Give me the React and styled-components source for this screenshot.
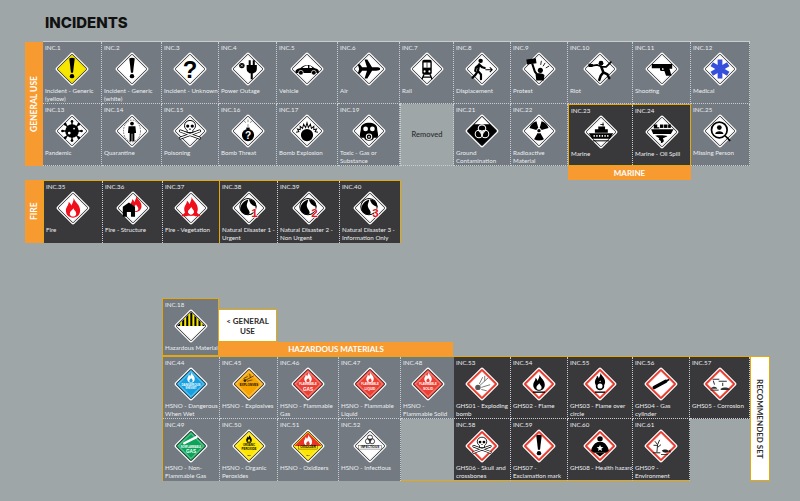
import styled, { createGlobalStyle } from 'styled-components';

const FLAME = 'M2,-28 C4,-16 20,-10 20,8 C20,20 11,28 0,28 C-11,28 -20,20 -20,8 C-20,-2 -12,-6 -12,-16 C-8,-14 -6,-10 -5,-6 C-2,-12 2,-18 2,-28Z M1,2 C3,8 9,10 9,17 C9,22 5,25 0,25 C-5,25 -9,22 -9,17 C-9,10 -2,8 1,2Z';

const diamond = v => `0,-${v} ${v},0 0,${v} -${v},0`;

function Sign({ fill = '#fff', edge = '#2b2b2b', thick = false, inset = false, children }) {
  return (
    <Icon viewBox="-50 -50 100 100">
      <polygon points={diamond(42)} fill="#fff" stroke="#fff" strokeWidth="12" strokeLinejoin="round" />
      <polygon points={diamond(40)} fill={edge} stroke={edge} strokeWidth="8" strokeLinejoin="round" />
      <polygon points={diamond(thick ? 37 : 40)} fill={fill} stroke={fill} strokeWidth={thick ? 1 : 3.5} strokeLinejoin="round" />
      {inset && <polygon points={diamond(37)} fill="none" stroke="#fff" strokeWidth="1.5" strokeLinejoin="round" />}
      {children}
    </Icon>
  );
}

const Flame = ({ x = 0, y = 0, s = 1, color = '#000' }) => (
  <path d={FLAME} fill={color} fillRule="evenodd" transform={`translate(${x} ${y}) scale(${s})`} />
);

const Bang = () => (
  <>
    <path d="M-8,-31 Q0,-35 8,-31 L3,11 L-3,11Z" fill="#000" />
    <circle cx="0" cy="21" r="6.5" fill="#000" />
  </>
);

const Skull = ({ y = 0, s = 1 }) => (
  <g transform={`translate(0 ${y}) scale(${s})`}>
    <line x1="-30" y1="2" x2="30" y2="24" stroke="#000" strokeWidth="9" strokeLinecap="round" />
    <line x1="30" y1="2" x2="-30" y2="24" stroke="#000" strokeWidth="9" strokeLinecap="round" />
    <line x1="-30" y1="2" x2="30" y2="24" stroke="#fff" strokeWidth="4.5" strokeLinecap="round" />
    <line x1="30" y1="2" x2="-30" y2="24" stroke="#fff" strokeWidth="4.5" strokeLinecap="round" />
    <path d="M-17,-14 C-17,-36 17,-36 17,-14 C17,-6 11,-3 9,0 V7 H-9 V0 C-11,-3 -17,-6 -17,-14Z" fill="#fff" stroke="#000" strokeWidth="3" />
    <circle cx="-7" cy="-13" r="5" fill="#000" />
    <circle cx="7" cy="-13" r="5" fill="#000" />
    <path d="M0,-7 L3,-2 H-3Z" fill="#000" />
  </g>
);

const Biohazard = ({ color = '#fff', y = 0, s = 1 }) => (
  <g transform={`translate(0 ${y}) scale(${s})`} fill="none" stroke={color} strokeWidth="3">
    <circle cx="0" cy="-10" r="11" />
    <circle cx="-9" cy="6" r="11" />
    <circle cx="9" cy="6" r="11" />
    <circle cx="0" cy="1" r="5" strokeWidth="2" />
  </g>
);

const sector = (mid, half, r0, r1, cy) => {
  const pt = (a, r) => {
    const t = (a * Math.PI) / 180;
    return `${(r * Math.cos(t)).toFixed(1)},${(cy + r * Math.sin(t)).toFixed(1)}`;
  };
  return `M${pt(mid - half, r0)} L${pt(mid - half, r1)} A${r1},${r1} 0 0 1 ${pt(mid + half, r1)} L${pt(mid + half, r0)} A${r0},${r0} 0 0 0 ${pt(mid - half, r0)}Z`;
};

const Globe = ({ n }) => (
  <>
    <circle cx="-3" cy="-4" r="24" fill="#fff" stroke="#000" strokeWidth="3" />
    <path d="M-25,-2 C-20,-18 -8,-24 -2,-24 C-4,-16 -8,-10 -6,-4 C-4,4 2,6 2,14 C2,20 -6,20 -12,18 C-20,14 -26,8 -25,-2Z" fill="#000" />
    <path d="M0,-26 C12,-26 20,-16 22,-4 C12,-6 2,-12 0,-26Z" fill="#000" />
    <SignText x="16" y="26" fontSize="34" fill="#e8141c" stroke="#fff" strokeWidth="2.5" paintOrder="stroke">{n}</SignText>
  </>
);

const Labels = ({ color = '#fff', lines }) =>
  lines.map(([text, y, size, len]) => (
    <SignText key={text} x="0" y={y} fontSize={size} fill={color} textLength={len} lengthAdjust="spacingAndGlyphs">
      {text}
    </SignText>
  ));

const glyphs = {
  yellowBang: () => <Sign fill="#f7e600"><Bang /></Sign>,
  bang: () => <Sign><Bang /></Sign>,
  question: () => <Sign><SignText x="0" y="25" fontSize="70" fill="#000">?</SignText></Sign>,
  plug: () => (
    <Sign>
      <circle cx="-18" cy="-10" r="8" fill="#000" />
      <path d="M-21,-13 L-15,-7 M-15,-13 L-21,-7" stroke="#fff" strokeWidth="2" />
      <path d="M2,-26 H8 V-12 H14 V-26 H20 V-12 H26 V0 C26,9 18,13 14,13 V30 H8 V13 C5,13 -4,9 -4,0 V-12 H2Z" fill="#000" />
    </Sign>
  ),
  car: () => (
    <Sign>
      <path d="M-34,8 C-34,1 -26,-1 -19,-3 C-10,-13 6,-14 14,-8 L23,-2 C31,-1 35,3 35,9 L33,12 H-32Z" fill="#000" />
      <path d="M-14,-3 C-8,-9 -2,-10 3,-10 V-3Z M7,-10 C10,-9 13,-7 16,-3 H7Z" fill="#fff" />
      <circle cx="-18" cy="11" r="7" fill="#000" stroke="#fff" strokeWidth="2" />
      <circle cx="20" cy="11" r="7" fill="#000" stroke="#fff" strokeWidth="2" />
    </Sign>
  ),
  plane: () => (
    <Sign>
      <path d="M33,0 C33,-4 27,-5 21,-5 H9 L-5,-28 H-13 L-6,-5 H-20 L-27,-14 H-33 L-29,0 L-33,14 H-27 L-20,5 H-6 L-13,28 H-5 L9,5 H21 C27,5 33,4 33,0Z" fill="#000" />
    </Sign>
  ),
  rail: () => (
    <Sign>
      <rect x="-14" y="-27" width="28" height="44" rx="6" fill="#000" />
      <rect x="-10" y="-19" width="20" height="15" fill="#fff" />
      <rect x="-1" y="-19" width="2" height="15" fill="#000" />
      <circle cx="-7" cy="7" r="3" fill="#fff" />
      <circle cx="7" cy="7" r="3" fill="#fff" />
      <path d="M-9,16 L-15,30 M9,16 L15,30 M-12,24 H12" stroke="#000" strokeWidth="4" fill="none" />
    </Sign>
  ),
  displacement: () => (
    <Sign>
      <circle cx="-4" cy="-24" r="6.5" fill="#000" />
      <path d="M-8,-14 L-12,6 L-3,16 L-3,30 M-12,6 L-20,18 L-28,26 M-8,-13 L-18,-4 L-20,6 M-8,-13 L1,-5 L8,-3" stroke="#000" strokeWidth="6.5" strokeLinecap="round" strokeLinejoin="round" fill="none" />
      <path d="M10,2 H30 M23,-5 L30,2 L23,9" stroke="#000" strokeWidth="3" fill="none" />
    </Sign>
  ),
  protest: () => (
    <Sign>
      <rect x="-36" y="-30" width="28" height="15" fill="#000" transform="rotate(-8 -21 -21)" />
      <path d="M-20,-16 L-12,8 L-4,18" stroke="#000" strokeWidth="6" fill="none" />
      <circle cx="4" cy="4" r="7.5" fill="#000" />
      <path d="M-8,34 L-10,16 C-2,10 10,12 16,18 L14,34Z" fill="#000" />
      <path d="M12,-8 L18,-18 M20,-3 L30,-9 M5,-12 L7,-24" stroke="#000" strokeWidth="2.5" />
    </Sign>
  ),
  riot: () => (
    <Sign>
      <circle cx="3" cy="-17" r="7" fill="#000" />
      <path d="M4,-6 L10,10 L2,20 L-2,32 M10,10 L22,16 L27,27" stroke="#000" strokeWidth="7.5" strokeLinecap="round" strokeLinejoin="round" fill="none" />
      <path d="M5,-7 L-8,-12 L-22,-10 M6,-6 L18,-6 L32,-20" stroke="#000" strokeWidth="5" strokeLinecap="round" strokeLinejoin="round" fill="none" />
      <path d="M-34,-16 L-20,-14 L-22,-6 L-34,-6Z" fill="#000" />
    </Sign>
  ),
  gun: () => (
    <Sign>
      <path d="M-30,-15 H30 V-1 H22 L28,20 H12 L7,6 H-2 C-5,6 -6,4 -6,1 V-2 H-30Z M0,-2 V2 H5 L4,-2Z" fill="#000" fillRule="evenodd" />
    </Sign>
  ),
  medical: () => (
    <Sign>
      {[0, 60, 120].map(a => (
        <rect key={a} x="-7" y="-28" width="14" height="56" fill="#3650dc" transform={`rotate(${a})`} />
      ))}
    </Sign>
  ),
  pandemic: () => (
    <Sign>
      {[0, 45, 90, 135, 180, 225, 270, 315].map(a => (
        <g key={a} transform={`rotate(${a})`}>
          <rect x="-2" y="-29" width="4" height="12" fill="#000" />
          <circle cx="0" cy="-28" r="4" fill="#000" />
        </g>
      ))}
      <circle r="20" fill="#000" />
      <circle cx="-8" cy="6" r="4" fill="#fff" />
      <circle cx="6" cy="-7" r="2.5" fill="#fff" />
    </Sign>
  ),
  quarantine: () => (
    <Sign>
      <ellipse cx="0" cy="0" rx="25" ry="32" fill="none" stroke="#000" strokeWidth="1.5" strokeDasharray="5 3" />
      <circle cx="0" cy="-22" r="5.5" fill="#000" />
      <path d="M-10,-14 H10 L12,6 H7 V30 H1 V8 H-1 V30 H-7 V6 H-12Z" fill="#000" />
    </Sign>
  ),
  poison: () => <Sign><Skull y="-2" s="0.95" /></Sign>,
  bombThreat: () => (
    <Sign>
      <circle cx="0" cy="12" r="18" fill="#000" />
      <rect x="-5" y="-10" width="10" height="6" fill="#000" />
      <path d="M0,-10 V-20 M0,-26 V-34 M-7,-24 L-11,-30 M7,-24 L11,-30" stroke="#555" strokeWidth="2" />
      <SignText x="0" y="23" fontSize="30" fill="#fff">?</SignText>
    </Sign>
  ),
  explosion: () => (
    <Sign>
      <circle cx="0" cy="12" r="18" fill="#000" />
      <path d="M-32,4 L-24,2 L-28,-6 L-20,-4 L-20,-14 L-13,-8 L-10,-20 L-4,-10 L0,-24 L4,-10 L10,-20 L13,-8 L20,-14 L20,-4 L28,-6 L24,2 L32,4" fill="none" stroke="#000" strokeWidth="3" />
    </Sign>
  ),
  gasMask: () => (
    <Sign>
      <path d="M-24,-8 C-24,-30 24,-30 24,-8 C24,4 30,12 24,20 L14,20 C14,32 -14,32 -14,20 L-24,20 C-30,12 -24,4 -24,-8Z" fill="#000" />
      <circle cx="-10" cy="-6" r="7" fill="#fff" />
      <circle cx="10" cy="-6" r="7" fill="#fff" />
      <circle cx="0" cy="17" r="8" fill="none" stroke="#fff" strokeWidth="3" />
      <circle cx="0" cy="17" r="2.5" fill="#fff" />
    </Sign>
  ),
  biohazardGround: () => (
    <Sign fill="#000">
      <polygon points="0,-42 22,-20 -22,-20" fill="#fff" />
      <Biohazard y="3" />
    </Sign>
  ),
  radiation: () => (
    <Sign>
      {[-135, -45, 90].map(a => (
        <path key={a} d={sector(a, 30, 8, 29, -1)} fill="#000" />
      ))}
      <circle cx="0" cy="-1" r="5" fill="#000" />
    </Sign>
  ),
  ship: () => (
    <Sign>
      <path d="M6,-28 V-16 M-2,-22 H8" stroke="#000" strokeWidth="2.5" />
      <path d="M-8,-16 H12 V-8 H20 V2 H-18 V-8 H-8Z" fill="#000" />
      <path d="M-36,4 H36 L26,20 H-26Z" fill="#000" />
      {[-20, -12, -4, 4, 12, 20].map(x => (
        <rect key={x} x={x - 2} y="9" width="4" height="5" fill="#fff" />
      ))}
      <path d="M-24,26 H24" stroke="#000" strokeWidth="3" />
    </Sign>
  ),
  oilSpill: () => (
    <Sign>
      <path d="M-32,-8 H34 L26,6 H-26Z" fill="#000" />
      <path d="M-24,-10 V-22 H-14 V-14 H-8 V-10Z" fill="#000" />
      <rect x="-6" y="-22" width="10" height="10" fill="#000" />
      <rect x="6" y="-22" width="10" height="10" fill="#000" />
      <rect x="18" y="-22" width="8" height="10" fill="#000" />
      <path d="M-20,11 C-8,9 8,10 16,12 C10,18 0,16 4,22 C8,28 2,32 -4,33 C0,28 -6,24 -10,22 C-4,18 -14,16 -20,11Z" fill="#000" />
    </Sign>
  ),
  missing: () => (
    <Sign>
      <circle cx="-2" cy="-3" r="23" fill="none" stroke="#000" strokeWidth="5" />
      <circle cx="-2" cy="-10" r="7" fill="#000" />
      <path d="M-14,9 C-14,-2 10,-2 10,9Z" fill="#000" />
      <path d="M15,14 L30,29" stroke="#000" strokeWidth="5" />
    </Sign>
  ),
  fire: () => <Sign><Flame color="#f0101c" s="1.05" y="-1" /></Sign>,
  fireStructure: () => (
    <Sign>
      <Flame color="#f0101c" x="8" y="-12" s="0.85" />
      <path d="M-30,-4 L-12,-16 L6,-4 V26 H-6 V12 H-18 V26 H-30Z" fill="#000" />
    </Sign>
  ),
  fireVegetation: () => (
    <Sign>
      <Flame color="#f0101c" s="1" y="-5" />
      <path d="M-30,24 C-22,18 -16,14 -12,2 C-12,14 -4,18 0,24 C4,18 12,14 12,2 C16,14 22,18 30,24 H12 C6,20 -6,20 -12,24Z" fill="#f0101c" />
    </Sign>
  ),
  disaster1: () => <Sign><Globe n="1" /></Sign>,
  disaster2: () => <Sign><Globe n="2" /></Sign>,
  disaster3: () => <Sign><Globe n="3" /></Sign>,
  hazmat: () => (
    <Sign>
      <polygon points="0,-41 41,0 -41,0" fill="#000" />
      {[-32, -20, -8, 4, 16, 28].map(x => (
        <polygon key={x} points={`${x},${-41 + Math.abs(x)} ${x + 6},${-41 + Math.abs(x + 6)} ${x + 6},0 ${x},0`} fill="#f7e600" />
      ))}
    </Sign>
  ),
  wet: () => (
    <Sign fill="#14a0e2" inset>
      <Flame color="#fff" y="-19" s="0.55" />
      <Labels lines={[['DANGEROUS', 5, 10, 56], ['WHEN WET', 15, 8, 32]]} />
    </Sign>
  ),
  explosives: () => (
    <Sign fill="#f8a400" inset>
      <path d="M-12,-10 L14,-24 M-16,-16 L-4,-22 M-6,-8 L10,-12 M2,-30 L4,-18" stroke="#222" strokeWidth="2" />
      <circle cx="-12" cy="-10" r="4" fill="#222" />
      <Labels color="#000" lines={[['EXPLOSIVES', 5, 10, 54]]} />
    </Sign>
  ),
  flamGas: () => (
    <Sign fill="#ee3f34" inset>
      <Flame color="#fff" y="-19" s="0.55" />
      <Labels lines={[['FLAMMABLE', 4, 9, 52], ['GAS', 21, 17, 30]]} />
    </Sign>
  ),
  flamLiquid: () => (
    <Sign fill="#ee3f34" inset>
      <Flame color="#fff" y="-19" s="0.55" />
      <Labels lines={[['FLAMMABLE', 4, 9, 52], ['LIQUID', 17, 11, 32]]} />
    </Sign>
  ),
  flamSolid: () => (
    <Sign fill="#ee3f34" inset>
      <Flame color="#fff" y="-19" s="0.55" />
      <Labels lines={[['FLAMMABLE', 4, 9, 52], ['SOLID', 17, 11, 30]]} />
    </Sign>
  ),
  nonFlam: () => (
    <Sign fill="#0ca45a" inset>
      <path d="M-20,-8 L16,-26" stroke="#fff" strokeWidth="7" strokeLinecap="round" />
      <Labels lines={[['NONFLAMMABLE', 5, 8, 60], ['GAS', 22, 17, 30]]} />
    </Sign>
  ),
  peroxide: () => (
    <Sign fill="#ffe600" inset>
      <circle cx="0" cy="-16" r="7" fill="none" stroke="#000" strokeWidth="2.5" />
      <Flame x="0" y="-22" s="0.38" />
      <Labels color="#000" lines={[['ORGANIC', 1, 8.5, 36], ['PEROXIDE', 11, 8.5, 44], ['5.2', 28, 7, 9]]} />
    </Sign>
  ),
  oxidizer: () => (
    <Sign fill="#ffe600" inset>
      <polygon points="0,-40 40,0 -40,0" fill="#ee3124" />
      <Flame color="#fff" y="-17" s="0.6" />
      <rect x="-28" y="-1" width="56" height="10" fill="#ffe600" stroke="#000" strokeWidth="1" />
      <Labels color="#000" lines={[['OXIDIZER', 7, 9.5, 46], ['5.1', 28, 7, 9]]} />
    </Sign>
  ),
  infectious: () => (
    <Sign>
      <Biohazard color="#000" y="-18" s="0.68" />
      <rect x="-33" y="-2" width="66" height="11" fill="#fff" stroke="#000" strokeWidth="1" />
      <Labels color="#000" lines={[['INFECTIOUS', 7, 9.5, 54]]} />
    </Sign>
  ),
  ghsBomb: () => (
    <Sign edge="#e8392c" thick>
      <circle cx="-12" cy="10" r="8" fill="#555" />
      <path d="M-6,4 L18,-18 M-2,10 L24,2 M-8,0 L2,-20 M-2,16 L14,20 M8,-8 L8,-24" stroke="#666" strokeWidth="2.5" />
    </Sign>
  ),
  ghsFlame: () => (
    <Sign edge="#e8392c" thick>
      <Flame s="0.85" y="-4" />
      <rect x="-18" y="22" width="36" height="4" fill="#000" />
    </Sign>
  ),
  ghsOxidizer: () => (
    <Sign edge="#e8392c" thick>
      <Flame s="0.75" y="-12" />
      <circle cx="0" cy="6" r="10" fill="#fff" stroke="#000" strokeWidth="5" />
      <rect x="-15" y="22" width="30" height="4" fill="#000" />
    </Sign>
  ),
  ghsCylinder: () => (
    <Sign edge="#e8392c" thick>
      <path d="M-20,10 L14,-8" stroke="#000" strokeWidth="10" strokeLinecap="round" />
      <path d="M14,-8 L24,-13" stroke="#000" strokeWidth="5" />
    </Sign>
  ),
  ghsCorrosion: () => (
    <Sign edge="#e8392c" thick>
      <path d="M-22,-14 H-2 M-4,-8 H20 M-20,-10 L-16,2 M8,-4 L8,6" stroke="#333" strokeWidth="3" fill="none" />
      <path d="M-28,14 C-20,4 -10,8 -8,14Z M2,18 H28 V14 C20,8 8,10 2,14Z" fill="#333" />
      <path d="M-28,18 H-4" stroke="#333" strokeWidth="3" />
    </Sign>
  ),
  ghsSkull: () => <Sign edge="#e8392c" thick><Skull y="-1" s="0.82" /></Sign>,
  ghsBang: () => <Sign edge="#e8392c" thick><Bang /></Sign>,
  ghsHealth: () => (
    <Sign edge="#e8392c" thick>
      <circle cx="0" cy="-21" r="8" fill="#000" />
      <path d="M-7,-12 H7 C14,-10 24,0 26,14 L18,20 H-18 L-26,14 C-24,0 -14,-10 -7,-12Z M0,-3 L3,3 L10,4 L4,8 L6,15 L0,11 L-6,15 L-4,8 L-10,4 L-3,3Z" fill="#000" fillRule="evenodd" />
      <path d="M-14,20 L0,31 L14,20Z" fill="#000" />
    </Sign>
  ),
  ghsEnv: () => (
    <Sign edge="#e8392c" thick>
      <path d="M-12,18 L-10,-4 L-18,-14 M-10,-4 L-4,-18 M-10,4 L0,-4 M-10,-2 L-22,-2" stroke="#222" strokeWidth="2.8" fill="none" />
      <path d="M-24,20 H-2" stroke="#222" strokeWidth="3" />
      <path d="M2,14 C8,8 18,10 22,14 L28,10 V20 L22,16 C16,22 8,20 2,14Z" fill="#222" />
      <path d="M0,25 H20" stroke="#222" strokeWidth="2.5" />
    </Sign>
  ),
};

const generalTop = [
  ['INC.1', 'Incident - Generic\n(yellow)', 'yellowBang'],
  ['INC.2', 'Incident - Generic\n(white)', 'bang'],
  ['INC.3', 'Incident - Unknown', 'question'],
  ['INC.4', 'Power Outage', 'plug'],
  ['INC.5', 'Vehicle', 'car'],
  ['INC.6', 'Air', 'plane'],
  ['INC.7', 'Rail', 'rail'],
  ['INC.8', 'Displacement', 'displacement'],
  ['INC.9', 'Protest', 'protest'],
  ['INC.10', 'Riot', 'riot'],
  ['INC.11', 'Shooting', 'gun'],
  ['INC.12', 'Medical', 'medical'],
];
const generalLeft = [
  ['INC.13', 'Pandemic', 'pandemic'],
  ['INC.14', 'Quarantine', 'quarantine'],
  ['INC.15', 'Poisoning', 'poison'],
  ['INC.16', 'Bomb Threat', 'bombThreat'],
  ['INC.17', 'Bomb Explosion', 'explosion'],
  ['INC.19', 'Toxic - Gas or\nSubstance', 'gasMask'],
];
const generalRight = [
  ['INC.21', 'Ground\nContamination', 'biohazardGround'],
  ['INC.22', 'Radioactive\nMaterial', 'radiation'],
];
const marine = [
  ['INC.23', 'Marine', 'ship'],
  ['INC.24', 'Marine - Oil Spill', 'oilSpill'],
];
const fire = [
  ['INC.35', 'Fire', 'fire'],
  ['INC.36', 'Fire - Structure', 'fireStructure'],
  ['INC.37', 'Fire - Vegetation', 'fireVegetation'],
  ['INC.38', 'Natural Disaster 1 -\nUrgent', 'disaster1'],
  ['INC.39', 'Natural Disaster 2 -\nNon Urgent', 'disaster2'],
  ['INC.40', 'Natural Disaster 3 -\nInformation Only', 'disaster3'],
];
const hazmatTop = [
  ['INC.44', 'HSNO - Dangerous\nWhen Wet', 'wet'],
  ['INC.45', 'HSNO - Explosives', 'explosives'],
  ['INC.46', 'HSNO - Flammable\nGas', 'flamGas'],
  ['INC.47', 'HSNO - Flammable\nLiquid', 'flamLiquid'],
  ['INC.48', 'HSNO -\nFlammable Solid', 'flamSolid'],
];
const hazmatBottom = [
  ['INC.49', 'HSNO - Non-\nFlammable Gas', 'nonFlam'],
  ['INC.50', 'HSNO - Organic\nPeroxides', 'peroxide'],
  ['INC.51', 'HSNO - Oxidizers', 'oxidizer'],
  ['INC.52', 'HSNO - Infectious', 'infectious'],
];
const ghsTop = [
  ['INC.53', 'GHS01 - Exploding\nbomb', 'ghsBomb'],
  ['INC.54', 'GHS02 - Flame', 'ghsFlame'],
  ['INC.55', 'GHS03 - Flame over\ncircle', 'ghsOxidizer'],
  ['INC.56', 'GHS04 - Gas\ncylinder', 'ghsCylinder'],
  ['INC.57', 'GHS05 - Corrosion', 'ghsCorrosion'],
];
const ghsBottom = [
  ['INC.58', 'GHS06 - Skull and\ncrossbones', 'ghsSkull'],
  ['INC.59', 'GHS07 -\nExclamation mark', 'ghsBang'],
  ['INC.60', 'GHS08 - Health hazard', 'ghsHealth'],
  ['INC.61', 'GHS09 -\nEnvironment', 'ghsEnv'],
];

function Tile({ item, dark, closed, wall }) {
  const [code, label, glyph] = item;
  const Glyph = glyphs[glyph];
  return (
    <Cell $dark={dark} $closed={closed} $wall={wall}>
      <Code>{code}</Code>
      <Glyph />
      <Label>{label}</Label>
    </Cell>
  );
}

export default function App() {
  return (
    <Page>
      <GlobalStyle />
      <Title>INCIDENTS</Title>

      <Band>
        <SideTab $h={124}>GENERAL USE</SideTab>
        <GeneralGrid>
          {generalTop.map(item => <Tile key={item[0]} item={item} />)}
          {generalLeft.map(item => <Tile key={item[0]} item={item} />)}
          <Removed>Removed</Removed>
          {generalRight.map(item => <Tile key={item[0]} item={item} />)}
          <MarineBox>
            {marine.map(item => <Tile key={item[0]} item={item} dark closed />)}
          </MarineBox>
          <Tile item={['INC.25', 'Missing Person', 'missing']} />
          <MarineTag>MARINE</MarineTag>
        </GeneralGrid>
      </Band>

      <Band>
        <SideTab $h={63}>FIRE</SideTab>
        <FireGrid>
          {fire.map((item, i) => <Tile key={item[0]} item={item} dark closed wall={i === 2} />)}
        </FireGrid>
      </Band>

      <HazardHead>
        <HazardCard>
          <Tile item={['INC.18', 'Hazardous Material', 'hazmat']} closed />
        </HazardCard>
        <HazardTitles>
          <BackBox>{'< GENERAL\nUSE'}</BackBox>
          <HazardBar>HAZARDOUS MATERIALS</HazardBar>
        </HazardTitles>
      </HazardHead>

      <HazardRow>
        <HazardGrid>
          {hazmatTop.map(item => <Tile key={item[0]} item={item} />)}
          {hazmatBottom.map(item => <Tile key={item[0]} item={item} closed />)}
        </HazardGrid>
        <GhsGrid>
          {ghsTop.map(item => <Tile key={item[0]} item={item} dark />)}
          {ghsBottom.map(item => <Tile key={item[0]} item={item} dark closed />)}
        </GhsGrid>
        <RecommendedBar>RECOMMENDED SET</RecommendedBar>
      </HazardRow>
    </Page>
  );
}

const GlobalStyle = createGlobalStyle`
  * { box-sizing: border-box; }
  html, body { margin: 0; background: #9ea6a8; }
`;

const Page = styled.div`
  width: 800px;
  height: 501px;
  padding: 15px 0 0 25px;
  background: #9ea6a8;
  font-family: Lato, "Open Sans", sans-serif;
  overflow: hidden;
`;

const Title = styled.h1`
  margin: 0 0 12px 20px;
  font-family: Inter, sans-serif;
  font-size: 15px;
  line-height: 15px;
  font-weight: 800;
  color: #111;
`;

const Band = styled.div`
  display: flex;
  align-items: flex-start;
`;

const SideTab = styled.div`
  width: 18px;
  height: ${p => p.$h}px;
  display: flex;
  align-items: center;
  justify-content: center;
  background: #f79a30;
  color: #fff;
  font-size: 8.5px;
  font-weight: 700;
  writing-mode: vertical-rl;
  transform: rotate(180deg);
`;

const GeneralGrid = styled.div`
  display: grid;
  grid-template-columns: 59px 60px 57px 58px 61px 62px 54px 57px 57px 65px 58px 59px;
  grid-template-rows: 62px 62px 14px;
  box-shadow: 0 -1px 0 0 #c9cdd1;
`;

const Cell = styled.div`
  display: flex;
  flex-direction: column;
  height: 62px;
  padding-top: 1px;
  overflow: hidden;
  background: ${p => (p.$dark ? '#39393b' : '#737a82')};
  border-right: ${p => (p.$wall ? '1px solid #e5a90f' : '1px dotted #c9cdd1')};
  border-bottom: ${p => (p.$closed ? 'none' : '1px dotted #c9cdd1')};
`;

const Code = styled.div`
  height: 9px;
  padding-left: 2px;
  font-size: 6.2px;
  line-height: 9px;
  color: #eceef0;
`;

const Icon = styled.svg`
  display: block;
  flex: none;
  width: 34px;
  height: 34px;
  margin: 0 auto;
`;

const SignText = styled.text`
  font-family: "Liberation Sans", sans-serif;
  font-weight: 700;
  text-anchor: middle;
`;

const Label = styled.div`
  margin-top: 1px;
  padding-left: 2px;
  font-size: 6.2px;
  line-height: 8px;
  color: #eceef0;
  white-space: pre;
`;

const Removed = styled.div`
  display: flex;
  align-items: center;
  justify-content: center;
  height: 62px;
  background: #9ea6a8;
  border-right: 1px dotted #c9cdd1;
  border-bottom: 1px dotted #c9cdd1;
  border-left: 1px dotted #c9cdd1;
  color: #2b2b2b;
  font-size: 7.5px;
  font-weight: 500;
`;

const MarineBox = styled.div`
  grid-column: span 2;
  display: grid;
  grid-template-columns: 64px 1fr;
  height: 62px;
  border: 1px solid #e5a90f;
  & > div {
    height: 60px;
  }
  & > div:last-child {
    border-right: none;
  }
`;

const MarineTag = styled.div`
  grid-column: 10 / span 2;
  height: 14px;
  background: #f79a30;
  color: #fff;
  font-size: 8px;
  line-height: 14px;
  font-weight: 700;
  text-align: center;
`;

const FireGrid = styled.div`
  display: grid;
  grid-template-columns: 59px 60px 57px 58px 62px 60px;
  height: 63px;
  border: 1px solid #e5a90f;
  & > div:last-child {
    border-right: none;
  }
`;

const HazardHead = styled.div`
  display: flex;
  align-items: stretch;
  margin: 55px 0 0 137px;
  height: 58px;
`;

const HazardCard = styled.div`
  width: 57px;
  border: 1px solid #e5a90f;
  background: #737a82;
  & > div {
    border: none;
    height: 56px;
  }
`;

const HazardTitles = styled.div`
  display: flex;
  flex-direction: column;
  justify-content: flex-end;
  width: 234px;
`;

const BackBox = styled.div`
  width: 58px;
  height: 33px;
  padding-top: 6px;
  background: #fff;
  border: 1px solid #e5a90f;
  border-left: none;
  color: #2b2b2b;
  font-size: 8px;
  line-height: 10px;
  font-weight: 700;
  text-align: center;
  white-space: pre;
`;

const HazardBar = styled.div`
  height: 14px;
  background: #f79a30;
  color: #fff;
  font-size: 8px;
  line-height: 14px;
  font-weight: 700;
  text-align: center;
`;

const HazardRow = styled.div`
  display: flex;
  margin-left: 137px;
  height: 125px;
`;

const HazardGrid = styled.div`
  display: grid;
  grid-template-columns: 57px 58px 61px 62px 54px;
  grid-auto-rows: 62px;
  width: 292px;
  height: 125px;
  border: 1px solid #e5a90f;
  border-right: none;
`;

const GhsGrid = styled.div`
  display: grid;
  grid-template-columns: 57px 57px 65px 57px 60px;
  grid-auto-rows: 62px;
  width: 296px;
  height: 125px;
  border-top: 1px solid #e5a90f;
  & > div:nth-child(n + 6) {
    border-bottom: 1px solid #e5a90f;
    height: 62px;
  }
`;

const RecommendedBar = styled.div`
  width: 20px;
  height: 125px;
  display: flex;
  align-items: center;
  justify-content: center;
  background: #fff;
  border: 1px solid #e5a90f;
  color: #2b2b2b;
  font-size: 8px;
  font-weight: 700;
  writing-mode: vertical-rl;
`;
